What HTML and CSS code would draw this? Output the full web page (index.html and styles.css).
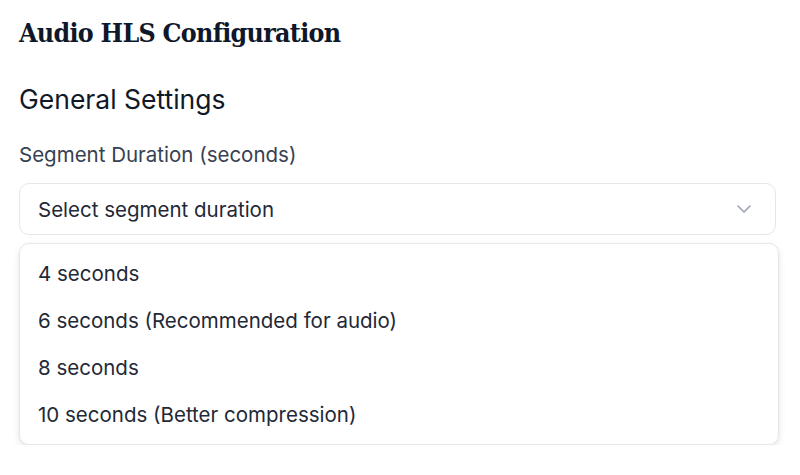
FILE: index.html
```html
<!DOCTYPE html>
<html>
<head>
<meta charset="utf-8">
<link rel="stylesheet" href="styles.css">
</head>
<body>
<main class="page">
  <h1 class="title">Audio HLS Configuration</h1>
  <h2 class="section">General Settings</h2>
  <div class="field">
    <label class="label">Segment Duration (seconds)</label>
    <div class="select">
      <span class="placeholder">Select segment duration</span>
      <svg class="chev" width="24" height="24" viewBox="0 0 24 24" fill="none" stroke="currentColor" stroke-width="1.6" stroke-linecap="round" stroke-linejoin="round"><path d="M6 9l6 6 6-6"/></svg>
    </div>
    <ul class="menu">
      <li class="option">4 seconds</li>
      <li class="option">6 seconds (Recommended for audio)</li>
      <li class="option">8 seconds</li>
      <li class="option">10 seconds (Better compression)</li>
    </ul>
  </div>
</main>
</body>
</html>
```
FILE: styles.css
```css
* { box-sizing: border-box; }
html, body { margin: 0; padding: 0; background: #fff; }
body { font-family: Inter, "Noto Sans", sans-serif; color: #111827; }
.page { padding: 15px 24px 0 19px; }
.title {
  font-family: "DejaVu Serif Condensed", "DejaVu Serif", serif;
  font-weight: 700;
  font-size: 26.5px;
  letter-spacing: -0.7px;
  margin: 0;
  line-height: 36px;
  color: #0f172a;
}
.section {
  font-weight: 400;
  font-size: 26.5px;
  line-height: 32px;
  margin: 0;
  padding-top: 32px;
  color: #111827;
}
.field { display: flex; flex-direction: column; }
.label { font-size: 20.5px; color: #374151; margin-top: 28px; line-height: 24px; }
.select {
  margin-top: 16px;
  height: 52px;
  border: 1px solid #e5e7eb;
  border-radius: 10px;
  display: flex;
  align-items: center;
  justify-content: space-between;
  padding: 0 19px 0 18px;
  font-size: 20.5px;
  color: #1f2937;
}
.chev { color: #9ca3af; }
.menu {
  list-style: none;
  margin: 8px -3px 0 0;
  padding: 6px 0;
  border: 1px solid #e5e7eb;
  border-radius: 10px;
  box-shadow: 0 4px 8px rgba(0,0,0,0.08), 0 1px 3px rgba(0,0,0,0.06);
}
.option { height: 47px; display: flex; align-items: center; padding-left: 18px; font-size: 20.5px; color: #1f2937; }
```
